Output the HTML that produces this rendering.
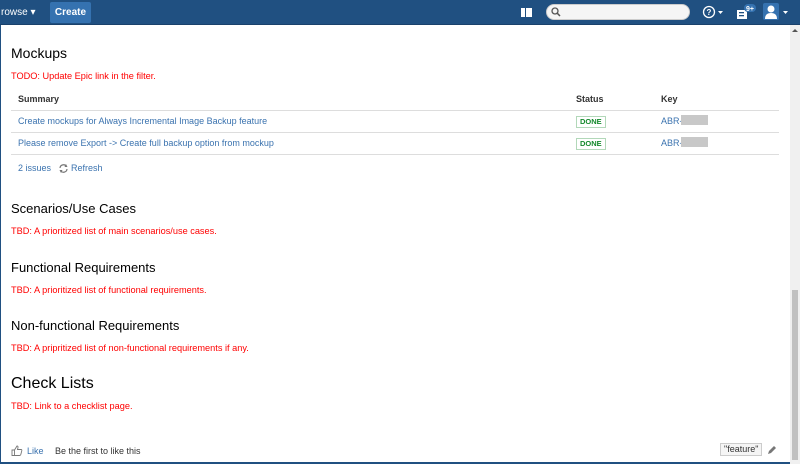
<!DOCTYPE html>
<html><head><meta charset="utf-8"><style>
*{box-sizing:border-box;margin:0;padding:0}
body{width:800px;height:464px;overflow:hidden;background:#fff;font-family:"Liberation Sans",Arial,sans-serif;position:relative}
#hdr{position:absolute;left:0;top:0;width:800px;height:25px;background:#205081;border-bottom:1px solid #1a416b}
#main{position:absolute;left:0;top:25px;width:790px;height:439px;border-left:1px solid #205081;border-bottom:2px solid #205081;background:#fff}
#sb{position:absolute;left:790px;top:25px;width:10px;height:439px;background:#f0f0f0}
#thumb{position:absolute;left:792px;top:290px;width:6px;height:170px;background:#c1c1c1}
.abs{position:absolute;white-space:nowrap}
h2{position:absolute;font-weight:normal;color:#000;font-size:13px;white-space:nowrap}
.red{position:absolute;color:#f00;font-size:9.2px;white-space:nowrap}
.lnk{color:#3b73af}
.done{position:absolute;font-size:7.5px;font-weight:bold;color:#14892c;border:1px solid #b2d8b9;padding:1px 3px;line-height:8px}
.gray{position:absolute;width:27px;height:10px;background:#c8c8c8}
.hr{position:absolute;left:11px;width:768px;height:1px;background:#ddd}
.t{font-size:9px}
</style></head><body>
<div id="hdr">
 <div class="abs" style="left:1px;top:7px;color:#fff;font-size:10px">rowse ▾</div>
 <div class="abs" style="left:50px;top:2px;width:41px;height:21px;background:#3572b0;border-radius:2px;color:#fff;font-size:10px;font-weight:bold;text-align:center;line-height:21px">Create</div>
 <svg class="abs" style="left:521px;top:8px" width="11" height="9"><rect x="0" y="0" width="4" height="9" fill="#fff"/><rect x="5" y="0" width="6" height="9" fill="#fff"/></svg>
 <div class="abs" style="left:546px;top:4px;width:144px;height:16px;background:#f5f5f5;border-radius:8px;border:1px solid #ccc"></div>
 <svg class="abs" style="left:551px;top:7px" width="10" height="10"><circle cx="4" cy="4" r="3" fill="none" stroke="#555" stroke-width="1.3"/><line x1="6.2" y1="6.2" x2="9" y2="9" stroke="#555" stroke-width="1.5"/></svg>
 <svg class="abs" style="left:702px;top:5px" width="22" height="14"><circle cx="7" cy="7" r="5.5" fill="none" stroke="#fff" stroke-width="1.3"/><text x="7" y="10" font-size="8" font-weight="bold" fill="#fff" text-anchor="middle" font-family="Liberation Sans">?</text><path d="M16 6 l2.5 3 l2.5 -3z" fill="#fff"/></svg>
 <svg class="abs" style="left:736px;top:4px" width="20" height="16"><rect x="1" y="6" width="10" height="9" fill="#fff"/><rect x="3" y="8" width="5" height="1.3" fill="#205081"/><rect x="3" y="11" width="5" height="1.3" fill="#205081"/><rect x="8" y="0" width="12" height="8" rx="4" fill="#3572b0"/><text x="14" y="7" font-size="7" font-weight="bold" fill="#fff" text-anchor="middle" font-family="Liberation Sans">9+</text></svg>
 <div class="abs" style="left:763px;top:3px;width:16px;height:17px;background:#3572b0;border-radius:2px"></div>
 <svg class="abs" style="left:763px;top:3px" width="26" height="17"><circle cx="8" cy="6" r="3.5" fill="#fff"/><path d="M2 16 q0 -6 6 -6 q6 0 6 6z" fill="#fff"/><path d="M20 8 l2.5 3 l2.5 -3z" fill="#fff"/></svg>
</div>
<div id="main"></div>
<div id="sb"></div><div id="thumb"></div>
<svg class="abs" style="left:792px;top:28px" width="6" height="5"><path d="M0 4 L3 1 L6 4z" fill="#555"/></svg>

<h2 style="left:11px;top:45px;font-size:14px">Mockups</h2>
<div class="red" style="left:11px;top:71px">TODO: Update Epic link in the filter.</div>
<div class="abs t" style="left:18px;top:94px;font-weight:bold;color:#333">Summary</div>
<div class="abs t" style="left:576px;top:94px;font-weight:bold;color:#333">Status</div>
<div class="abs t" style="left:661px;top:94px;font-weight:bold;color:#333">Key</div>
<div class="hr" style="top:110px"></div>
<div class="abs t lnk" style="left:18px;top:116px">Create mockups for Always Incremental Image Backup feature</div>
<div class="done" style="left:576px;top:116px">DONE</div>
<div class="abs t lnk" style="left:661px;top:116px">ABR-</div><div class="gray" style="left:681px;top:115px"></div>
<div class="hr" style="top:132px"></div>
<div class="abs t lnk" style="left:18px;top:138px">Please remove Export -&gt; Create full backup option from mockup</div>
<div class="done" style="left:576px;top:138px">DONE</div>
<div class="abs t lnk" style="left:661px;top:138px">ABR-</div><div class="gray" style="left:681px;top:137px"></div>
<div class="hr" style="top:154px"></div>
<div class="abs t lnk" style="left:18px;top:163px">2 issues</div>
<svg class="abs" style="left:58px;top:163px" width="11" height="11"><path d="M2 5 A3.5 3.5 0 0 1 8.5 3.5 M9 6 A3.5 3.5 0 0 1 2.5 7.5" fill="none" stroke="#777" stroke-width="1.2"/><path d="M8 1 L9.5 4 L6.5 4z M3 10 L1.5 7 L4.5 7z" fill="#777"/></svg>
<div class="abs t lnk" style="left:71px;top:163px">Refresh</div>

<h2 style="left:11px;top:201px">Scenarios/Use Cases</h2>
<div class="red" style="left:11px;top:226px">TBD: A prioritized list of main scenarios/use cases.</div>
<h2 style="left:11px;top:260px">Functional Requirements</h2>
<div class="red" style="left:11px;top:285px">TBD: A prioritized list of functional requirements.</div>
<h2 style="left:11px;top:318px">Non-functional Requirements</h2>
<div class="red" style="left:11px;top:343px">TBD: A pripritized list of non-functional requirements if any.</div>
<h2 style="left:11px;top:375px;font-size:16px">Check Lists</h2>
<div class="red" style="left:11px;top:401px">TBD: Link to a checklist page.</div>

<svg class="abs" style="left:11px;top:445px" width="12" height="11"><path d="M1 5 h2.5 v5.5 h-2.5z M3.5 5 l2.5 -4 q1.2 0 1 1.5 l-0.5 2 h3.5 q1 0 0.8 1.2 l-1 3.8 q-0.3 1 -1.3 1 h-5" fill="none" stroke="#777" stroke-width="0.9"/></svg>
<div class="abs t lnk" style="left:27px;top:446px">Like</div>
<div class="abs t" style="left:55px;top:446px;color:#333">Be the first to like this</div>
<div class="abs" style="left:720px;top:443px;height:13px;padding:0 3px;background:#f5f5f5;border:1px solid #ccc;font-size:9px;color:#333;line-height:11px">"feature"</div>
<svg class="abs" style="left:767px;top:445px" width="10" height="10"><path d="M1 9 l1 -3 l5 -5 l2 2 l-5 5z" fill="#777"/></svg>
</body></html>
